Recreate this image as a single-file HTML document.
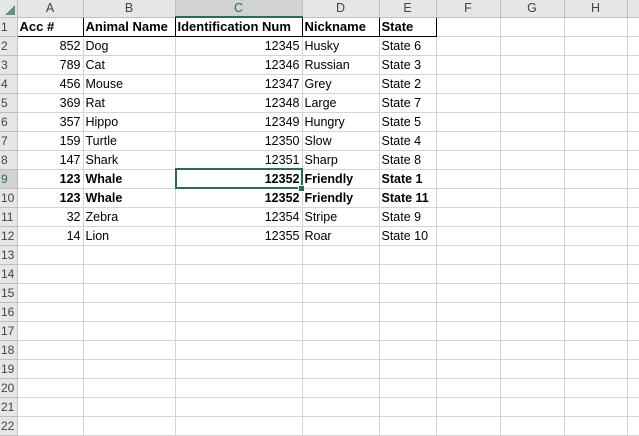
<!DOCTYPE html><html><head><style>
body{margin:0;background:#fff;font-family:"Liberation Sans",sans-serif;font-size:12.5px;color:#000;overflow:hidden;width:639px;height:425px;position:relative}
table{border-collapse:collapse;table-layout:fixed;position:absolute;left:0;top:0;width:657px}
td{height:18px;border-right:1px solid #d4d4d4;border-bottom:1px solid #d4d4d4;padding:0 2px;white-space:nowrap;overflow:hidden;line-height:18px}
tr.h td{height:16px;background:#e6e6e6;text-align:center;color:#444;border-color:#bfbfbf;line-height:16px}
td.rh{background:#e6e6e6;color:#444;border-color:#bfbfbf;text-align:left;padding-left:1px;font-size:12px}
.r{text-align:right}
.b{font-weight:bold}
tr.t td.c{border-bottom:1px solid #000;border-right:1px solid #000;border-top:1px solid #000;font-size:13px}
</style></head><body>
<table>
<colgroup><col style="width:17px"><col style="width:66px"><col style="width:92px"><col style="width:127px"><col style="width:77px"><col style="width:57px"><col style="width:64px"><col style="width:64px"><col style="width:63px"><col style="width:30px"></colgroup>
<tr class="h"><td style="position:relative"><svg width="12" height="12" style="position:absolute;right:1px;bottom:1px"><path d="M11 1L11 11L1 11Z" fill="#217346" opacity=".7"/></svg></td><td>A</td><td>B</td><td style="background:#d2d2d2;border-bottom:2px solid #217346;color:#217346">C</td><td>D</td><td>E</td><td>F</td><td>G</td><td>H</td><td></td></tr>
<tr class="t"><td class="rh">1</td><td class="c b">Acc #</td><td class="c b">Animal Name</td><td class="c b">Identification Num</td><td class="c b">Nickname</td><td class="c b">State</td><td></td><td></td><td></td><td></td></tr>
<tr><td class="rh">2</td><td class="r">852</td><td>Dog</td><td class="r">12345</td><td>Husky</td><td>State 6</td><td></td><td></td><td></td><td></td></tr>
<tr><td class="rh">3</td><td class="r">789</td><td>Cat</td><td class="r">12346</td><td>Russian</td><td>State 3</td><td></td><td></td><td></td><td></td></tr>
<tr><td class="rh">4</td><td class="r">456</td><td>Mouse</td><td class="r">12347</td><td>Grey</td><td>State 2</td><td></td><td></td><td></td><td></td></tr>
<tr><td class="rh">5</td><td class="r">369</td><td>Rat</td><td class="r">12348</td><td>Large</td><td>State 7</td><td></td><td></td><td></td><td></td></tr>
<tr><td class="rh">6</td><td class="r">357</td><td>Hippo</td><td class="r">12349</td><td>Hungry</td><td>State 5</td><td></td><td></td><td></td><td></td></tr>
<tr><td class="rh">7</td><td class="r">159</td><td>Turtle</td><td class="r">12350</td><td>Slow</td><td>State 4</td><td></td><td></td><td></td><td></td></tr>
<tr><td class="rh">8</td><td class="r">147</td><td>Shark</td><td class="r">12351</td><td>Sharp</td><td>State 8</td><td></td><td></td><td></td><td></td></tr>
<tr class="b"><td class="rh" style="background:#d2d2d2;color:#217346;font-weight:normal">9</td><td class="r">123</td><td>Whale</td><td class="r">12352</td><td>Friendly</td><td>State 1</td><td></td><td></td><td></td><td></td></tr>
<tr class="b"><td class="rh" style="font-weight:normal">10</td><td class="r">123</td><td>Whale</td><td class="r">12352</td><td>Friendly</td><td>State 11</td><td></td><td></td><td></td><td></td></tr>
<tr><td class="rh">11</td><td class="r">32</td><td>Zebra</td><td class="r">12354</td><td>Stripe</td><td>State 9</td><td></td><td></td><td></td><td></td></tr>
<tr><td class="rh">12</td><td class="r">14</td><td>Lion</td><td class="r">12355</td><td>Roar</td><td>State 10</td><td></td><td></td><td></td><td></td></tr>
<tr><td class="rh">13</td><td></td><td></td><td></td><td></td><td></td><td></td><td></td><td></td><td></td></tr>
<tr><td class="rh">14</td><td></td><td></td><td></td><td></td><td></td><td></td><td></td><td></td><td></td></tr>
<tr><td class="rh">15</td><td></td><td></td><td></td><td></td><td></td><td></td><td></td><td></td><td></td></tr>
<tr><td class="rh">16</td><td></td><td></td><td></td><td></td><td></td><td></td><td></td><td></td><td></td></tr>
<tr><td class="rh">17</td><td></td><td></td><td></td><td></td><td></td><td></td><td></td><td></td><td></td></tr>
<tr><td class="rh">18</td><td></td><td></td><td></td><td></td><td></td><td></td><td></td><td></td><td></td></tr>
<tr><td class="rh">19</td><td></td><td></td><td></td><td></td><td></td><td></td><td></td><td></td><td></td></tr>
<tr><td class="rh">20</td><td></td><td></td><td></td><td></td><td></td><td></td><td></td><td></td><td></td></tr>
<tr><td class="rh">21</td><td></td><td></td><td></td><td></td><td></td><td></td><td></td><td></td><td></td></tr>
<tr><td class="rh">22</td><td></td><td></td><td></td><td></td><td></td><td></td><td></td><td></td><td></td></tr>
</table>
<div style="position:absolute;left:175px;top:168px;width:124px;height:17px;border:2px solid #217346"></div>
<div style="position:absolute;left:298px;top:185px;width:5px;height:5px;background:#217346;border:1px solid #fff"></div>
</body></html>
